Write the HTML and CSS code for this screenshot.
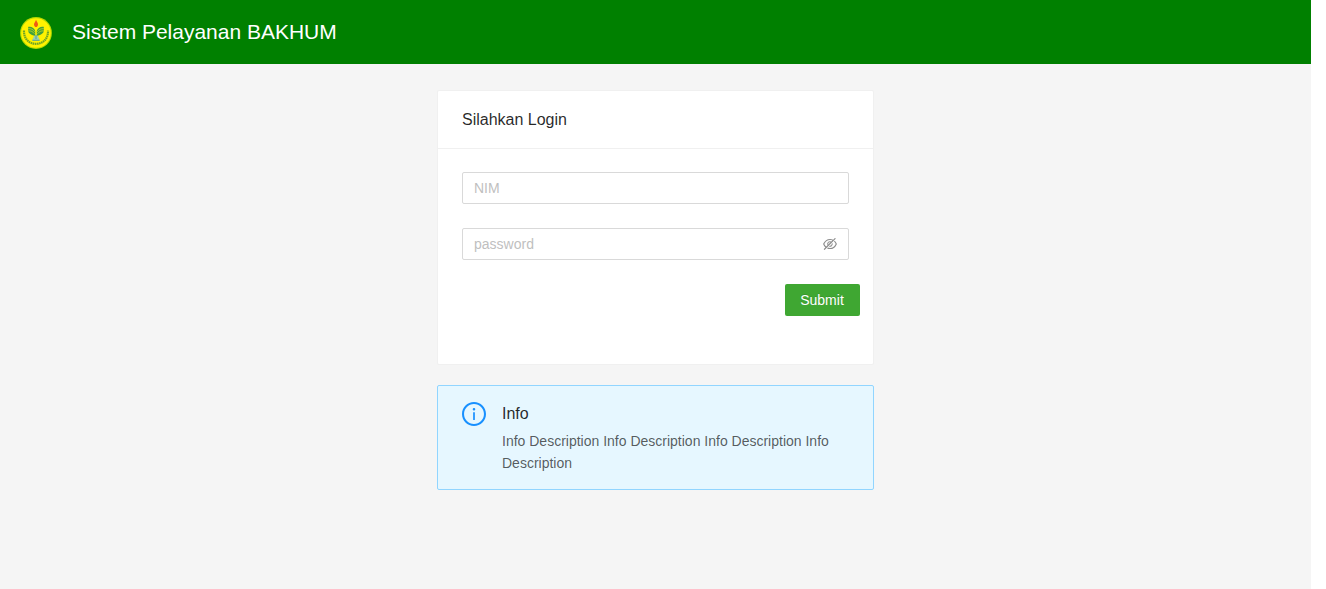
FILE: index.html
```html
<!DOCTYPE html>
<html lang="id">
<head>
<meta charset="utf-8">
<title>Sistem Pelayanan BAKHUM</title>
<link rel="stylesheet" href="styles.css">
</head>
<body>
<div class="layout">
  <header class="header">
    <svg class="logo" viewBox="0 0 32 32" aria-hidden="true">
      <circle cx="16" cy="16" r="15.9" fill="#b4d800"/>
      <circle cx="16" cy="16" r="14.8" fill="#fff200"/>
      <path d="M4 13.500C3.600 20.500 8 26.800 16 26.800S28.400 20.500 28 13.500" fill="none" stroke="#6fa524" stroke-width="2.200" stroke-dasharray="1.600 .5"/>
      <path d="M16 2.600c.3 2 2 2.800 2 4.900 0 1.500-1 2.600-2 2.600s-2-1.100-2-2.600c0-1.800 1.700-2.600 2-4.900z" fill="#f05a14"/>
      <path d="M8.300 9.800c3.200-.6 6.200 1.200 6.900 4.200v5.600c-1.700-1.500-4.700-1.700-6.400-3.800-.7-1.700-.9-4-.5-6z M23.700 9.800c-3.200-.6-6.200 1.200-6.900 4.200v5.600c1.700-1.500 4.700-1.700 6.400-3.800.7-1.700.9-4 .5-6z" fill="#43a03a"/>
      <path d="M8 11.700c3-.4 5.300.8 6.800 3.200M8.200 13.900c2.600-.3 5 .8 6.300 2.900M24 11.700c-3-.4-5.300.8-6.800 3.200M23.800 13.900c-2.600-.3-5 .8-6.300 2.900" fill="none" stroke="#cfe022" stroke-width=".7"/>
      <path d="M14.300 18.600h3.400l2.300 5h-8z" fill="#9ccfae"/>
      <path d="M16 18v4M12.400 23.300h7.200" stroke="#4f9c8a" stroke-width=".9"/>
    </svg>
    <h1 class="brand">Sistem Pelayanan BAKHUM</h1>
  </header>
  <main class="content">
    <section class="card">
      <h2 class="card-head">Silahkan Login</h2>
      <form class="card-body">
        <div class="field"><input class="input" type="text" placeholder="NIM"></div>
        <div class="field">
          <input class="input" type="password" placeholder="password">
          <svg class="eye" viewBox="64 64 896 896" fill="currentColor"><path d="M942.2 486.2Q889.47 375.11 816.7 305l-50.88 50.88C807.31 395.53 843.45 447.4 874.7 512 791.5 684.2 673.4 766 512 766q-72.67 0-133.87-22.38L323 798.75Q408 838 512 838q288.3 0 430.2-300.3a60.29 60.29 0 000-51.5zm-63.57-320.64L836 122.88a8 8 0 00-11.32 0L715.31 232.2Q624.86 186 512 186q-288.3 0-430.2 300.3a60.3 60.3 0 000 51.5q56.69 119.4 136.5 191.41L112.48 835a8 8 0 000 11.31L155.17 889a8 8 0 0011.31 0l712.15-712.12a8 8 0 000-11.32zM149.3 512C232.6 339.8 350.7 258 512 258c54.54 0 104.13 9.36 149.12 28.39l-70.3 70.3a176 176 0 00-238.13 238.13l-83.42 83.42C223.1 637.49 183.3 582.28 149.3 512zm246.7 0a112.11 112.11 0 01146.2-106.69L401.31 546.2A112 112 0 01396 512z"/><path d="M508 624c-3.46 0-6.87-.16-10.25-.47l-52.82 52.82a176.09 176.09 0 00227.42-227.42l-52.82 52.82c.31 3.38.47 6.79.47 10.25a111.94 111.94 0 01-112 112z"/></svg>
        </div>
        <div class="actions"><button class="submit" type="button">Submit</button></div>
      </form>
    </section>
    <section class="alert">
      <svg class="alert-icon" viewBox="64 64 896 896" fill="currentColor"><path d="M512 64C264.600 64 64 264.600 64 512s200.600 448 448 448 448-200.600 448-448S759.400 64 512 64zm0 820c-205.400 0-372-166.600-372-372s166.600-372 372-372 372 166.600 372 372-166.600 372-372 372z"/><path d="M464 336a48 48 0 1096 0 48 48 0 10-96 0zm72 112h-48c-4.400 0-8 3.600-8 8v272c0 4.400 3.600 8 8 8h48c4.400 0 8-3.600 8-8V456c0-4.400-3.600-8-8-8z"/></svg>
      <div class="alert-text">
        <div class="alert-title">Info</div>
        <div class="alert-desc">Info Description Info Description Info Description Info Description</div>
      </div>
    </section>
  </main>
</div>
</body>
</html>
```
FILE: styles.css
```css
* { box-sizing: border-box; }
body {
  margin: 0;
  background: #fff;
  color: rgba(0, 0, 0, .85);
  font: 14px/1.5715 "Liberation Sans", Arial, sans-serif;
}
.layout {
  width: 1311px;
  height: 589px;
  background: #f5f5f5;
  overflow: hidden;
}
.header {
  display: flex;
  align-items: center;
  height: 64px;
  padding: 2px 20px 0;
  background: #008000;
}
.logo { width: 32px; height: 32px; margin-right: 20px; }
.brand {
  margin: -4px 0 0;
  color: #fff;
  font-size: 21px;
  font-weight: 400;
  letter-spacing: -.01px;
}
.content {
  width: 437px;
  margin: 0 auto;
  padding-top: 26px;
}
.card {
  height: 275px;
  background: #fff;
  border: 1px solid #f0f0f0;
  border-radius: 2px;
}
.card-head {
  margin: 0 0 -1px;
  padding: 16px 24px;
  border-bottom: 1px solid #f0f0f0;
  font-size: 16px;
  font-weight: 400;
}
.card-body { margin: 0; padding: 24px; }
.field { position: relative; height: 32px; margin-bottom: 24px; }
.input {
  display: block;
  width: 100%;
  height: 32px;
  padding: 4px 11px;
  border: 1px solid #d9d9d9;
  border-radius: 2px;
  background: #fff;
  color: inherit;
  font: inherit;
}
.input::placeholder { color: #bfbfbf; }
.eye {
  position: absolute;
  top: 9px;
  right: 12px;
  width: 14px;
  height: 14px;
  color: rgba(0, 0, 0, .45);
}
.actions { display: flex; justify-content: flex-end; margin-right: -11px; }
.submit {
  width: 75px;
  height: 32px;
  padding: 4px 1px 4px 0;
  border: 0;
  border-radius: 2px;
  background: #3fa732;
  color: #fff;
  font: inherit;
  text-shadow: 0 -1px 0 rgba(0, 0, 0, .12);
}
.alert {
  display: flex;
  align-items: flex-start;
  margin-top: 20px;
  padding: 15px 15px 15px 24px;
  border: 1px solid #91d5ff;
  border-radius: 2px;
  background: #e6f7ff;
}
.alert-icon {
  flex: none;
  width: 24px;
  height: 24px;
  margin: 1px 16px 0 0;
  color: #1890ff;
}
.alert-title { margin-bottom: 4px; font-size: 16px; }
.alert-desc { color: rgba(0, 0, 0, .65); }
```
